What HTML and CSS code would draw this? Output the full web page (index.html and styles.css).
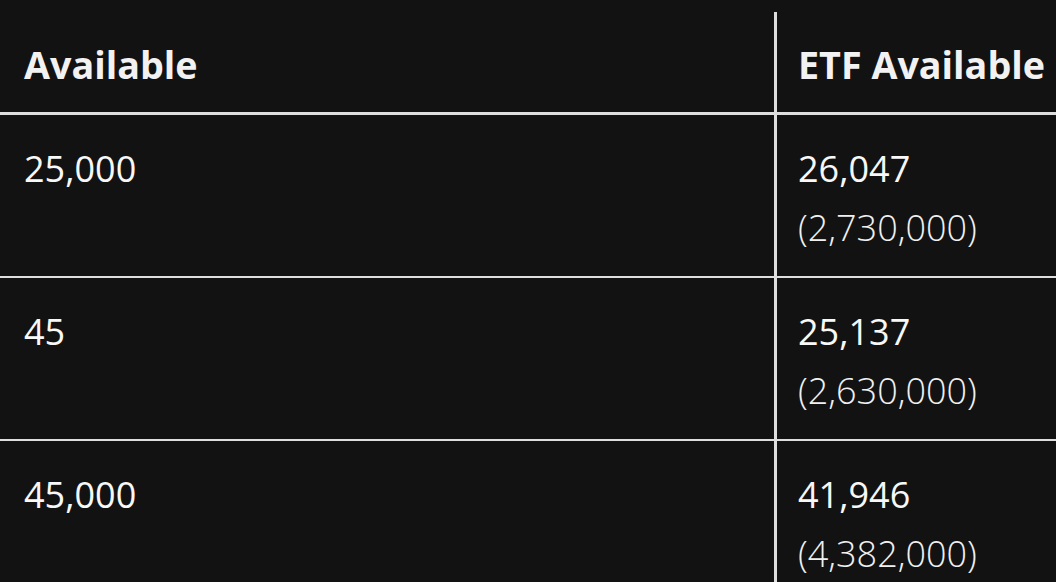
FILE: index.html
```html
<!DOCTYPE html>
<html>
<head>
<meta charset="utf-8">
<link rel="stylesheet" href="styles.css">
</head>
<body>
<div class="table">
  <div class="row head">
    <div class="cell a">Available</div>
    <div class="cell b">ETF Available</div>
  </div>
  <div class="row">
    <div class="cell a"><div class="main">25,000</div></div>
    <div class="cell b"><div class="main">26,047</div><div class="sub">(2,730,000)</div></div>
  </div>
  <div class="row">
    <div class="cell a"><div class="main">45</div></div>
    <div class="cell b"><div class="main">25,137</div><div class="sub">(2,630,000)</div></div>
  </div>
  <div class="row">
    <div class="cell a"><div class="main">45,000</div></div>
    <div class="cell b"><div class="main">41,946</div><div class="sub">(4,382,000)</div></div>
  </div>
</div>
</body>
</html>
```
FILE: styles.css
```css
html, body {
  margin: 0;
  padding: 0;
  background: #121212;
  overflow: hidden;
  width: 1056px;
  height: 582px;
}
body {
  font-family: "Open Sans", "Noto Sans", sans-serif;
  color: #f4f4f4;
  padding-top: 12px;
  box-sizing: border-box;
}
.table {
  width: 1120px;
}
.row {
  display: grid;
  grid-template-columns: 777px 1fr;
  border-bottom: 2px solid #dedede;
  font-size: 36px;
  line-height: 59px;
}
.cell {
  padding: 24px 20px 19px 24px;
}
.cell.a {
  border-right: 3px solid #dedede;
}
.cell.b {
  padding-left: 21px;
}
.head {
  border-bottom-width: 3px;
  font-size: 37.7px;
  font-weight: 700;
  line-height: 58px;
  color: #f2f2f2;
}
.head .cell {
  padding-top: 24px;
  padding-bottom: 18px;
}
.main {
  font-weight: 400;
  color: #f8f8f8;
}
.sub {
  font-weight: 300;
  color: #f0f0f0;
}
```
